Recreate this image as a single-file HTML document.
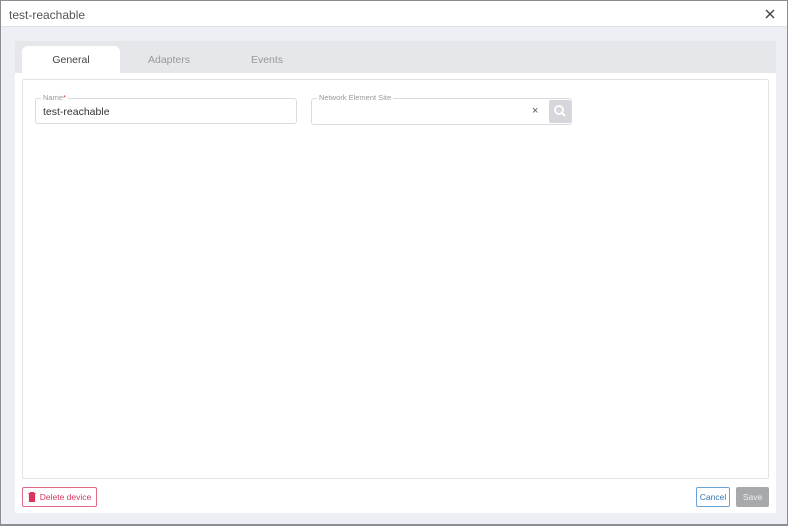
<!DOCTYPE html>
<html><head><style>
*{box-sizing:border-box;margin:0;padding:0}
body{width:788px;height:526px;overflow:hidden;font-family:"Liberation Sans",sans-serif;background:#8a8d93;position:relative}
.dlg{position:absolute;left:1px;top:1px;width:786px;height:523px;background:#eeeff4}
.hdr{position:absolute;left:0;top:0;width:786px;height:26px;background:#fff;border-bottom:1px solid #dfe1e6}
.hdr .t{position:absolute;left:8px;top:7px;font-size:12px;color:#555}
.x{position:absolute;right:12px;top:8px}
.panel{position:absolute;left:14px;top:40px;width:761px;height:472px;background:#fff}
.tabs{position:absolute;left:0;top:0;width:761px;height:32px;background:#e6e7eb}
.tab{position:absolute;top:13px;font-size:10.5px;color:#999;width:98px;text-align:center}
.tab.a{left:7px;top:5px;height:27px;background:#fff;border-radius:6px 6px 0 0;color:#444;padding-top:8px}
.content{position:absolute;left:7px;top:38px;width:747px;height:400px;border:1px solid #e2e3e8;border-radius:2px}
.f{position:absolute;border:1px solid #d9dbe0;border-radius:3px;height:26px}
.lbl{position:absolute;top:-6px;left:5px;background:#fff;padding:0 2px;font-size:7.5px;color:#999}
.val{position:absolute;left:7px;top:7px;font-size:10.5px;color:#333}
.btn{position:absolute;font-size:8.5px;border-radius:2px;text-align:center}
</style></head><body>
<div class="dlg">
<div class="hdr"><div class="t">test-reachable</div>
<svg class="x" width="10" height="10" viewBox="0 0 10 10"><path d="M1 1L9 9M9 1L1 9" stroke="#444" stroke-width="1.4"/></svg></div>
<div class="panel">
<div class="tabs">
<div class="tab a">General</div>
<div class="tab" style="left:105px">Adapters</div>
<div class="tab" style="left:203px">Events</div>
</div>
<div class="content">
<div class="f" style="left:12px;top:18px;width:262px"><div class="lbl">Name<span style="color:#d33">*</span></div><div class="val">test-reachable</div></div>
<div class="f" style="left:288px;top:18px;width:261px;height:27px"><div class="lbl">Network Element Site</div>
<div style="position:absolute;left:220px;top:6px;font-size:11px;color:#555">×</div>
<div style="position:absolute;left:237px;top:1px;width:22px;height:23px;background:#d5d7dc;border-radius:2px">
<svg width="22" height="23" viewBox="0 0 22 23"><circle cx="10" cy="10" r="4" stroke="#fff" stroke-width="1.8" fill="none"/><path d="M13 13L16 16" stroke="#fff" stroke-width="2"/></svg></div></div>
</div>
<div class="btn" style="left:7px;top:446px;width:75px;height:20px;border:1px solid #e06a85;color:#d9365e;line-height:18px;padding-left:12px">
<svg style="position:absolute;left:5px;top:4px" width="8" height="10" viewBox="0 0 8 10"><path d="M0.5 1.5H7.5M2.5 1.5V0.5H5.5V1.5M1.5 2.5H6.5V9.5H1.5Z" stroke="#d9365e" stroke-width="1.2" fill="#d9365e"/></svg>Delete device</div>
<div class="btn" style="left:681px;top:446px;width:34px;height:20px;border:1px solid #6aa3d6;color:#3578b8;line-height:18px">Cancel</div>
<div class="btn" style="left:721px;top:446px;width:33px;height:20px;background:#a8a9ab;color:#eee;line-height:20px">Save</div>
</div>
</div>
</body></html>
